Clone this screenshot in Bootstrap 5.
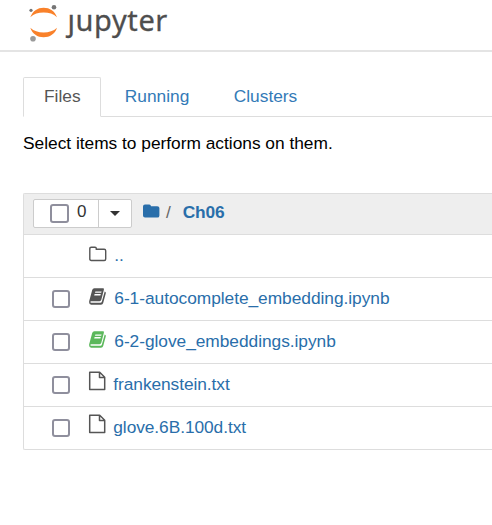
<!DOCTYPE html>
<html lang="en">
<head>
<meta charset="utf-8">
<title>Jupyter – Ch06</title>
<link href="https://cdn.jsdelivr.net/npm/bootstrap@5.3.0/dist/css/bootstrap.min.css" rel="stylesheet">
<style>
body{font-family:"Liberation Sans",Arial,sans-serif;font-size:17.33px;line-height:24px;color:#000;background:#fff;overflow:hidden}
a{color:#296eaa;text-decoration:none}
.topbar{height:52px;border-bottom:2px solid #e4e4e4;padding-left:28px}
.wordmark{font-family:"Noto Sans","Open Sans",sans-serif;font-size:29px;line-height:39px;letter-spacing:.6px;-webkit-text-stroke:.3px #4e4e4e;color:#4e4e4e;margin-left:8.5px}
.main-area{padding:25px 0 0 23px}
.nav-tabs{--bs-nav-tabs-border-color:#ddd;height:40px}
.nav-tabs .nav-link{height:40px;padding:6px 20px 0;margin-right:2.4px;color:#337ab7;border-radius:2px 2px 0 0}
.nav-tabs .nav-link.active{padding-right:19.2px;margin-right:3px;color:#555;border-color:#ddd #ddd #fff}
.hint{margin-top:14px;height:62px;letter-spacing:-.01px}
.files{border:1px solid #ddd;border-right:0;border-radius:2px 0 0 2px}
.files-head{height:40px;background:#eee;padding:0 0 2px 9px}
.files-head .crumb{letter-spacing:-.15px;margin:0 0 2px 11.8px}
.files-head .slash{margin-bottom:2px;color:#666}
.selector{height:29px;width:99px;border:1px solid #ccc;border-radius:2px;background:#fff;overflow:hidden}
.selector .count{width:65px;border-right:1px solid #ccc;padding-left:16px;font-size:17px;line-height:22px}
.selector .count span{padding-bottom:2px;color:#333}
.selector .caret{border:5px solid transparent;border-top-color:#333;border-bottom:0;margin-left:11px}
.box{width:18px;height:18px;border:2px solid #8f8f9d;border-radius:3px;background:#fff;appearance:none;margin:0;flex:none}
.selector .box{width:19px;height:19px}
.file-row{height:43px;border-top:1px solid #ddd;padding-left:28px}
.file-row a{margin-left:7.300px;margin-top:-2px;letter-spacing:-.04px}
.file-row a.text-file{margin-left:6.300px;letter-spacing:-.07px}
.icon-cell{width:19px;margin-left:18px;flex:none;color:#555}
.icon-cell.running{color:#5cb85c}
.icon-cell svg,.files-head svg,.topbar svg{display:block}
.icon-cell.raised{padding:0 0 8px}
.icon-cell.lifted{padding:0 0 4px 1px}
</style>
<script src="https://cdn.jsdelivr.net/npm/bootstrap@5.3.0/dist/js/bootstrap.bundle.min.js"></script>
</head>
<body>
<svg width="0" height="0" class="position-absolute" aria-hidden="true">
  <symbol id="book" viewBox="0 0 18 18">
    <path fill="currentColor" fill-rule="evenodd" d="M5.400.3H14q1.300 0 .9 1.400L12.300 11.800q-.4 1.400-1.700 1.400H2.200q-.9 0-.9.8 0 .8 1 .8h9.200q1 0 1.300-1L15.700 3.500q1.500.4 1.100 1.800L14.200 15q-.5 1.700-2.200 1.700H2.200Q.1 16.700.1 14.300q0-1.200.4-2.300L3.200 2Q3.700.3 5.400.3zM6.400 3.500l-.4 1.300h6.200l.4-1.300zM5.600 6.100l-.4 1.300h6.200l.4-1.300z"/>
  </symbol>
  <symbol id="page" viewBox="0 0 18 20">
    <path fill="none" stroke="currentColor" stroke-width="1.500" stroke-linejoin="round" d="M1.700 1.200h10l5 5v12.300h-15zM11.500 1.200v5.200h5.200"/>
  </symbol>
</svg>
<header class="topbar d-flex align-items-start">
  <svg width="31" height="44" viewBox="28 0 31 44" aria-label="Jupyter">
    <path fill="#f9812a" d="M30.300 17.300C32.500 11 37.500 7.700 43.600 7.700S55 11 57 17.300C53.500 14 49 12.600 43.600 12.600S34 14 30.300 17.300zM30.300 27.700C32.500 34 37.500 37.200 43.600 37.200S55 34 57 27.700C53.500 31 49 32.400 43.600 32.400S34 31 30.300 27.700z"/>
    <circle cx="31" cy="10.300" r="1.600" fill="#757575"/><circle cx="54" cy="7.300" r="2.300" fill="#757575"/><circle cx="33" cy="38.700" r="2.800" fill="#9a9a9a"/>
  </svg>
  <span class="wordmark">ȷupyter</span>
</header>
<main class="main-area">
  <ul class="nav nav-tabs flex-nowrap">
    <li class="nav-item"><a class="nav-link active" href="#">Files</a></li>
    <li class="nav-item"><a class="nav-link" href="#">Running</a></li>
    <li class="nav-item"><a class="nav-link" href="#">Clusters</a></li>
  </ul>
  <div class="hint">Select items to perform actions on them.</div>
  <section class="files">
    <div class="files-head d-flex align-items-center">
      <div class="selector d-flex align-items-stretch">
        <div class="count d-flex align-items-center"><input type="checkbox" class="box" aria-label="Select all"><span class="ms-2">0</span></div>
        <div class="d-flex align-items-center"><span class="caret"></span></div>
      </div>
      <svg class="mb-1" width="34" height="16" viewBox="-11 0 34 16"><path fill="#296eaa" d="M2 1.500h4.300q1.500 0 1.700 1.700h6.200q2.200 0 2.200 1.700v7.500q0 2.200-2 2.200H2q-2 0-2-2V3.500q0-2 2-2z"/></svg>
      <span class="slash">/</span>
      <a href="#" class="fw-bold crumb">Ch06</a>
    </div>
    <div class="file-row d-flex align-items-center">
      <span class="box invisible"></span>
      <span class="icon-cell lifted"><svg width="18" height="17" viewBox="0 0 18 17"><path fill="none" stroke="currentColor" stroke-width="1.400" d="M2.300 1.200h3.700q1.300 0 1.300 1.300v.8h7.900q1.500 0 1.500 1.500v8.200q0 1.500-1.500 1.500H2.300Q.8 14.500.8 13V2.700q0-1.500 1.500-1.500z"/></svg></span>
      <a href="#">..</a>
    </div>
    <div class="file-row d-flex align-items-center">
      <input type="checkbox" class="box" aria-label="Select">
      <span class="icon-cell lifted"><svg width="18" height="18"><use href="#book"/></svg></span>
      <a href="#">6-1-autocomplete_embedding.ipynb</a>
    </div>
    <div class="file-row d-flex align-items-center">
      <input type="checkbox" class="box" aria-label="Select">
      <span class="icon-cell lifted running"><svg width="18" height="18"><use href="#book"/></svg></span>
      <a href="#">6-2-glove_embeddings.ipynb</a>
    </div>
    <div class="file-row d-flex align-items-center">
      <input type="checkbox" class="box" aria-label="Select">
      <span class="icon-cell raised"><svg width="18" height="20"><use href="#page"/></svg></span>
      <a class="text-file" href="#">frankenstein.txt</a>
    </div>
    <div class="file-row d-flex align-items-center">
      <input type="checkbox" class="box" aria-label="Select">
      <span class="icon-cell raised"><svg width="18" height="20"><use href="#page"/></svg></span>
      <a class="text-file" href="#">glove.6B.100d.txt</a>
    </div>
  </section>
</main>
</body>
</html>
